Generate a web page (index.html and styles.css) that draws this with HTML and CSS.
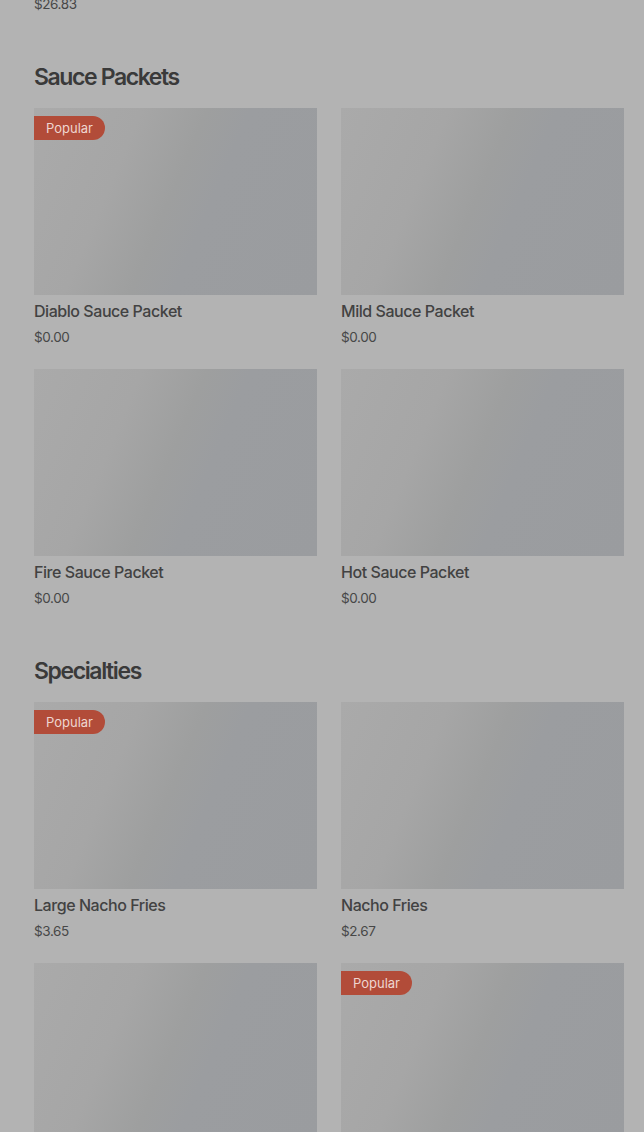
FILE: index.html
```html
<!DOCTYPE html>
<html lang="en">
<head>
<meta charset="utf-8">
<title>Menu</title>
<link rel="stylesheet" href="styles.css">
</head>
<body>
<main class="menu">
  <div class="price prev-price">$26.83</div>

  <section class="section">
    <h2 class="section-title">Sauce Packets</h2>
    <div class="grid">
      <div class="card">
        <div class="thumb"><span class="badge">Popular</span></div>
        <div class="name">Diablo Sauce Packet</div>
        <div class="price">$0.00</div>
      </div>
      <div class="card">
        <div class="thumb"></div>
        <div class="name">Mild Sauce Packet</div>
        <div class="price">$0.00</div>
      </div>
      <div class="card">
        <div class="thumb"></div>
        <div class="name">Fire Sauce Packet</div>
        <div class="price">$0.00</div>
      </div>
      <div class="card">
        <div class="thumb"></div>
        <div class="name">Hot Sauce Packet</div>
        <div class="price">$0.00</div>
      </div>
    </div>
  </section>

  <section class="section">
    <h2 class="section-title">Specialties</h2>
    <div class="grid">
      <div class="card">
        <div class="thumb"><span class="badge">Popular</span></div>
        <div class="name">Large Nacho Fries</div>
        <div class="price">$3.65</div>
      </div>
      <div class="card">
        <div class="thumb"></div>
        <div class="name">Nacho Fries</div>
        <div class="price">$2.67</div>
      </div>
      <div class="card">
        <div class="thumb"></div>
        <div class="name">Cheesy Fiesta Potatoes</div>
        <div class="price">$2.19</div>
      </div>
      <div class="card">
        <div class="thumb"><span class="badge">Popular</span></div>
        <div class="name">Chips and Nacho Cheese Sauce</div>
        <div class="price">$2.09</div>
      </div>
    </div>
  </section>
</main>
</body>
</html>
```

FILE: styles.css
```css
html, body {
  margin: 0;
  padding: 0;
  background: #b3b3b3;
  overflow: hidden;
}

body {
  font-family: Inter, "Liberation Sans", sans-serif;
  color: #3d3d3d;
}

.menu {
  padding: 0 20px 0 34px;
}

.section {
  margin-top: 47px;
}

.section-title {
  margin: 0 0 15px;
  font-size: 23px;
  line-height: 32px;
  font-weight: 600;
  letter-spacing: -1.4px;
  color: #3a3a3a;
}

.grid {
  display: grid;
  grid-template-columns: 1fr 1fr;
  column-gap: 24px;
  row-gap: 22px;
}

.card {
  display: flex;
  flex-direction: column;
}

.thumb {
  position: relative;
  height: 187px;
  margin-bottom: 4px;
  background: linear-gradient(113deg, #aaaaaa 0%, #a6a6a6 30%, #9e9f9f 48%, #9b9da0 60%, #9a9c9f 100%);
}

.badge {
  position: absolute;
  top: 8px;
  left: 0;
  height: 24px;
  padding: 0 12px;
  display: flex;
  align-items: center;
  background: #b24c39;
  color: #eed6d0;
  font-size: 13px;
  border-radius: 0 12px 12px 0;
}

.name {
  font-size: 16px;
  line-height: 24px;
  font-weight: 500;
  color: #424242;
  letter-spacing: -0.45px;
}

.price {
  margin-top: 4px;
  font-size: 13.5px;
  line-height: 20px;
  color: #474747;
  letter-spacing: -0.4px;
}

.price.prev-price {
  margin-top: -6px;
}
```
